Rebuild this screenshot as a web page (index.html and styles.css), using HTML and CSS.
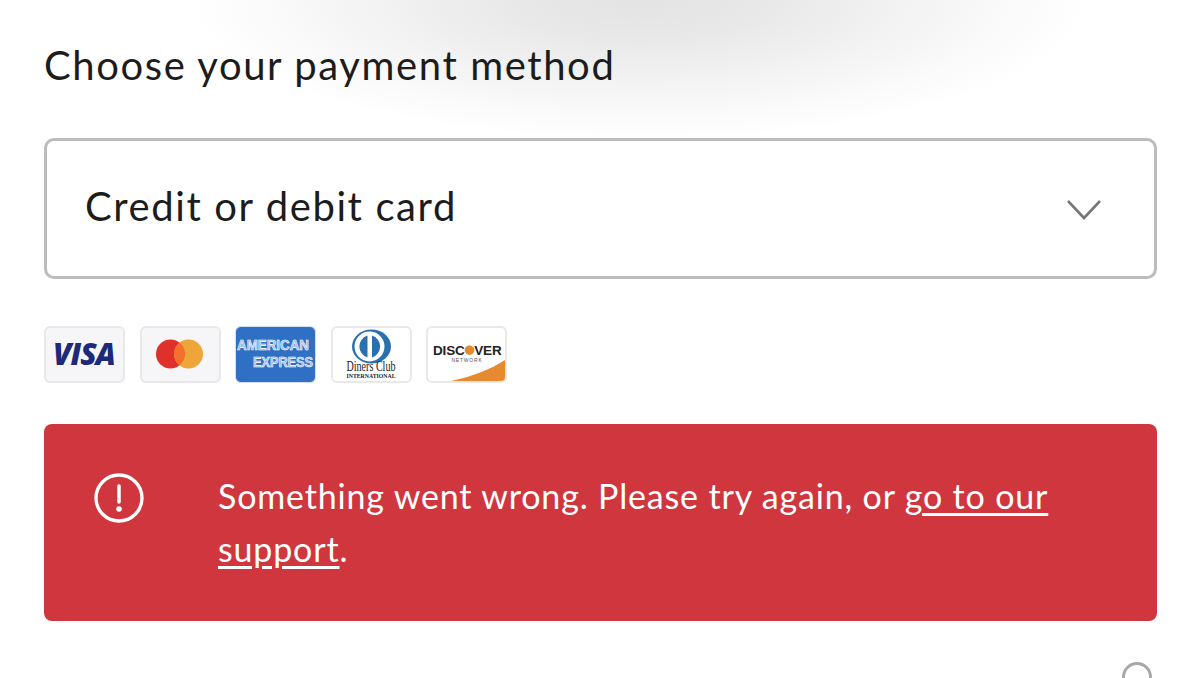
FILE: index.html
```html
<!DOCTYPE html>
<html lang="en">
<head>
  <meta charset="UTF-8" />
  <meta name="viewport" content="width=device-width, initial-scale=1.0"/>
  <title>Choose your payment method</title>
  <link rel="stylesheet" href="styles.css">
</head>
<body>
  <div class="container">
    <h2 class="title">Choose your payment method</h2>

    <div class="select-box">
      <span>Credit or debit card</span>
      <svg class="chevron" width="36" height="22" viewBox="0 0 36 22">
        <path d="M2 2 L18 19 L34 2" fill="none" stroke="#777" stroke-width="2.6"/>
      </svg>
    </div>

    <div class="cards">
      <div class="card card-grey">
        <svg width="77" height="53" viewBox="0 0 77 53">
          <text class="visa-text" x="38" y="36.500" text-anchor="middle">VISA</text>
        </svg>
      </div>
      <div class="card card-grey">
        <svg width="77" height="53" viewBox="0 0 77 53">
          <circle cx="28.500" cy="26" r="14.500" fill="#e0302b"/>
          <circle cx="46.500" cy="26" r="14.500" fill="#eea53a"/>
          <path d="M37.500 14.600 a14.500 14.500 0 0 1 0 22.800 a14.500 14.500 0 0 1 0 -22.800z" fill="#f4702c"/>
        </svg>
      </div>
      <div class="card card-amex">
        <svg width="79" height="55" viewBox="0 0 79 55">
          <text class="amex-text" x="37" y="23" text-anchor="middle" textLength="72" lengthAdjust="spacingAndGlyphs">AMERICAN</text>
          <text class="amex-text" x="47" y="40" text-anchor="middle" textLength="60" lengthAdjust="spacingAndGlyphs">EXPRESS</text>
        </svg>
      </div>
      <div class="card">
        <svg width="77" height="53" viewBox="0 0 77 53">
          <ellipse cx="38.500" cy="18.500" rx="19.500" ry="17" fill="#2a6fb0"/>
          <circle cx="36.500" cy="18.500" r="15" fill="#fff"/>
          <path d="M34.500 7.500 a11.500 11.500 0 0 0 0 22z M39 7.500 a11.500 11.500 0 0 1 0 22z" fill="#2a6fb0"/>
          <text class="diners-text" x="38" y="43" text-anchor="middle" textLength="49" lengthAdjust="spacingAndGlyphs">Diners Club</text>
          <text class="diners-small" x="38" y="50" text-anchor="middle" textLength="49" lengthAdjust="spacingAndGlyphs">INTERNATIONAL</text>
        </svg>
      </div>
      <div class="card">
        <svg width="77" height="53" viewBox="0 0 77 53">
          <text class="discover-text" x="36.500" y="27" text-anchor="end">DISC</text>
          <circle cx="41.500" cy="22.200" r="4.800" fill="#e58a2e"/>
          <text class="discover-text" x="46.300" y="27">VER</text>
          <text class="discover-small" x="39" y="34" text-anchor="middle">NETWORK</text>
          <path d="M23 53 C46 48 63 41 77 32 L77 53z" fill="#e58a2e"/>
        </svg>
      </div>
    </div>

    <div class="alert">
      <svg class="alert-icon" width="50" height="50" viewBox="0 0 50 50">
        <circle cx="25" cy="25" r="23" fill="none" stroke="#fff" stroke-width="3.400"/>
        <path d="M25 13 V29" stroke="#fff" stroke-width="3.500" stroke-linecap="round"/>
        <circle cx="25" cy="36" r="2.800" fill="#fff"/>
      </svg>
      <p class="alert-text">Something went wrong. Please try again, or <a href="#">go to our support</a>.</p>
    </div>

    <div class="spinner-row">
      <div class="spinner"></div>
    </div>
  </div>
</body>
</html>
```

FILE: styles.css
```css
* {
  box-sizing: border-box;
}

html, body {
  height: 100%;
}

body {
  font-family: Lato, "Liberation Sans", sans-serif;
  margin: 0;
  overflow: hidden;
  color: #1c1c1c;
  background: radial-gradient(ellipse 450px 140px at 640px 0, #e3e3e3 0%, #e9e9e9 30%, #f3f3f3 60%, #fbfbfb 85%, #fff 100%) no-repeat #fff;
}

.container {
  padding: 0 43px 0 44px;
}

.title {
  margin: 0;
  padding-top: 39px;
  height: 138px;
  font-size: 40px;
  line-height: 52px;
  font-weight: 400;
  letter-spacing: 1.600px;
}

.select-box {
  display: flex;
  align-items: center;
  justify-content: space-between;
  height: 141px;
  padding: 0 52px 6px 38px;
  background: #fff;
  border: 3px solid #bcbcbc;
  border-radius: 10px;
  font-size: 40px;
  letter-spacing: 1.600px;
}

.chevron {
  margin-top: 9px;
}

.cards {
  display: flex;
  gap: 14.500px;
  margin-top: 47px;
}

.card {
  display: flex;
  align-items: center;
  justify-content: center;
  width: 81px;
  height: 57px;
  background: #fff;
  border: 2px solid #e8e8e8;
  border-radius: 6px;
  overflow: hidden;
}

.card-grey {
  background: #f6f6f8;
}

.card-amex {
  background: #2f6fc4;
  border: 1px solid #cfe0f2;
}

.visa-text {
  font-family: "Open Sans", sans-serif;
  font-size: 30px;
  font-weight: 800;
  font-style: italic;
  letter-spacing: -1px;
  fill: #1c2a78;
}

.amex-text {
  font-family: "Liberation Sans", sans-serif;
  font-size: 14px;
  font-weight: 700;
  fill: #8fb4e4;
  stroke: #fff;
  stroke-width: 0.600px;
}

.diners-text {
  font-family: "Liberation Serif", serif;
  font-size: 15px;
  fill: #222;
}

.diners-small {
  font-family: "Liberation Serif", serif;
  font-size: 6.500px;
  font-weight: 700;
  fill: #222;
}

.discover-text {
  font-family: "Liberation Sans", sans-serif;
  font-size: 13.500px;
  font-weight: 700;
  letter-spacing: -0.200px;
  fill: #222;
}

.discover-small {
  font-family: "Liberation Sans", sans-serif;
  font-size: 5px;
  letter-spacing: 0.800px;
  fill: #555;
}

.alert {
  display: flex;
  align-items: flex-start;
  height: 197px;
  margin-top: 41px;
  padding: 47px 60px 0 50px;
  background: #d0363e;
  border-radius: 8px;
  color: #fff;
}

.alert-icon {
  flex: none;
  margin-top: 2px;
}

.alert-text {
  margin: -2px 0 0 74px;
  font-size: 34px;
  line-height: 53px;
  letter-spacing: 0.830px;
}

.alert-text a {
  color: #fff;
  text-underline-offset: 4px;
}

.spinner-row {
  display: flex;
  justify-content: flex-end;
  margin-top: 41px;
  padding-right: 5px;
}

.spinner {
  width: 30px;
  height: 30px;
  border: 3px solid #a8a8a8;
  border-radius: 50%;
}
```
